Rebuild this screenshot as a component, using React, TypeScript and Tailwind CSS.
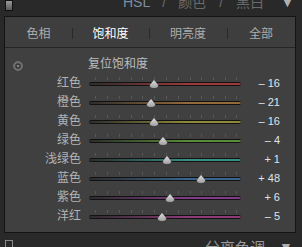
import React from 'react';

const rows = [
  { name: '红色', value: -16, color: '#9a3a3a' },
  { name: '橙色', value: -21, color: '#94693c' },
  { name: '黄色', value: -16, color: '#8e8a3a' },
  { name: '绿色', value: -4, color: '#588c38' },
  { name: '浅绿色', value: 1, color: '#358f84' },
  { name: '蓝色', value: 48, color: '#38648e' },
  { name: '紫色', value: 6, color: '#823a88' },
  { name: '洋红', value: -5, color: '#8c3a78' },
];

const ticks = [6, 18, 30, 42, 53, 65, 77, 89, 101, 112, 124, 136, 147];

function fmt(v: number) {
  return (v < 0 ? '– ' : '+ ') + Math.abs(v);
}

function Thumb() {
  return (
    <svg width="10" height="10" viewBox="0 0 10 10">
      <defs>
        <linearGradient id="tg" x1="0" y1="0" x2="0" y2="1">
          <stop offset="0" stopColor="#e2e2e2" />
          <stop offset="1" stopColor="#9c9c9c" />
        </linearGradient>
      </defs>
      <path d="M5 0.5 L9.5 6 Q9.5 9.5 5 9.5 Q0.5 9.5 0.5 6 Z" fill="url(#tg)" stroke="#2a2a2a" strokeWidth="0.6" />
    </svg>
  );
}

function SliderRow({ name, value, color }: { name: string; value: number; color: string }) {
  const pos = 77 + value * 0.72;
  return (
    <div className="flex h-[19px] items-center">
      <div className="w-[76px] text-right text-[12px] leading-[19px] text-[#b4b4b4]">{name}</div>
      <div className="relative ml-[8px] flex h-[19px] w-[152px] items-center">
        {ticks.map((t) => (
          <div key={t} className="absolute top-[3px] h-[3px] w-px bg-[#575757]" style={{ left: t }} />
        ))}
        <div
          className="h-[4px] w-full rounded-full border-y border-[#121212]"
          style={{ background: `linear-gradient(to right, #2c2c2c, ${color} 65%)` }}
        />
        <div className="absolute top-[5px]" style={{ left: pos - 5 }}>
          <Thumb />
        </div>
      </div>
      <div className="w-[39px] text-right font-['Liberation_Sans',sans-serif] text-[11px] leading-[19px] text-[#dfe3ea]">
        {fmt(value)}
      </div>
    </div>
  );
}

export default function App() {
  const tabs = [
    { label: '色相', w: 'w-[67px]', active: false },
    { label: '饱和度', w: 'w-[77px]', active: true },
    { label: '明亮度', w: 'w-[78px]', active: false },
    { label: '全部', w: 'w-[68px]', active: false },
  ];

  return (
    <div className="h-[247px] w-[302px] overflow-hidden bg-[#292929] font-['Liberation_Sans','Noto_Sans_CJK_SC',sans-serif]">
      {/* header */}
      <div className="flex h-[16px] items-start">
        <div className="ml-[5px] h-[11px] w-[8px] border border-[#111] bg-gradient-to-b from-[#9a9a9a] to-[#5a5a5a]" />
        <div className="-mt-[5px] ml-[110px] flex items-center text-[14px] leading-[14px] text-[#6a6a6a]">
          <span className="text-[#7d8ea3]">HSL</span>
          <span className="ml-[12px]">/</span>
          <span className="ml-[12px]">颜色</span>
          <span className="ml-[13px]">/</span>
          <span className="ml-[13px]">黑白</span>
          <span className="ml-[16px] text-[15px] text-[#b0b0b0]">▼</span>
        </div>
      </div>

      {/* panel */}
      <div className="ml-[4px] w-[292px] border border-[#141414] bg-[#404040]">
        <div className="flex h-[31px] items-center border-b border-[#262626] bg-[#3e3e3e]">
          {tabs.map((t, i) => (
            <div key={t.label} className={`relative flex h-full items-center justify-center ${t.w}`}>
              {i > 0 && <div className="absolute left-0 top-[11px] h-[11px] w-px bg-[#2a2a2a]" />}
              <span className={`mt-[3px] text-[12px] ${t.active ? 'text-white' : 'text-[#adadad]'}`}>{t.label}</span>
            </div>
          ))}
        </div>

        <div className="pb-[6px] pt-[7px]">
          <div className="flex h-[19px] items-center">
            <svg className="ml-[8px] mt-[3px]" width="10" height="10" viewBox="0 0 10 10">
              <circle cx="5" cy="5" r="4.2" fill="#5a5a5a" stroke="#8a8a8a" strokeWidth="1" />
              <circle cx="5" cy="5" r="2.6" fill="#3a3a3a" />
              <circle cx="5" cy="5" r="1.1" fill="#9a9a9a" />
            </svg>
            <span className="ml-[65px] text-[12px] leading-[19px] text-[#bcbcbc]">复位饱和度</span>
          </div>
          {rows.map((r) => (
            <SliderRow key={r.name} {...r} />
          ))}
        </div>
      </div>

      {/* next section */}
      <div className="mt-[7px] flex items-start">
        <div className="ml-[5px] h-[8px] w-[8px] border border-[#8a8a8a]" />
        <div className="ml-[192px] flex items-center text-[15px] leading-[15px] text-[#9a9a9a]">
          <span>分离色调</span>
          <span className="ml-[14px] text-[14px] text-[#b0b0b0]">▼</span>
        </div>
      </div>
    </div>
  );
}
